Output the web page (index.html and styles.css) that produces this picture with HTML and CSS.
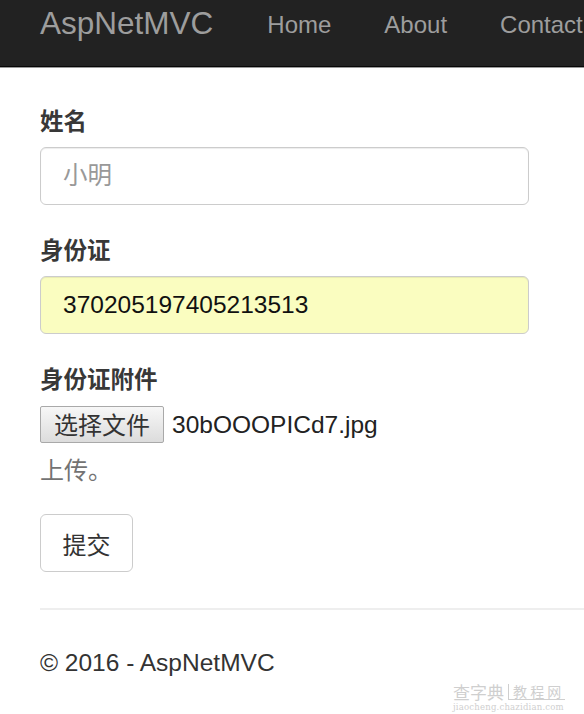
FILE: index.html
```html
<!DOCTYPE html>
<html lang="zh-CN">

<head>
    <meta charset="UTF-8">
    <meta name="viewport" content="width=device-width, initial-scale=1.0">
    <title>身份证上传 - AspNetMVC</title>
    <link rel="stylesheet" href="styles.css">
</head>

<body>
    <div class="navbar">
        <div class="navbar-inner">
            <a class="navbar-brand" href="#">AspNetMVC</a>
            <ul class="nav">
                <li><a href="#">Home</a></li>
                <li><a href="#">About</a></li>
                <li><a href="#">Contact</a></li>
            </ul>
        </div>
    </div>

    <div class="container body-content">
        <form class="upload-form">
            <div class="form-group">
                <label class="control-label">姓名</label>
                <input class="form-control" type="text" placeholder="小明">
            </div>
            <div class="form-group">
                <label class="control-label">身份证</label>
                <input class="form-control autofill" type="text" value="370205197405213513">
            </div>
            <div class="form-group">
                <label class="control-label">身份证附件</label>
                <div class="file-row">
                    <span class="file-btn">选择文件</span>
                    <span class="file-name">30bOOOPICd7.jpg</span>
                </div>
                <p class="help-block">上传。</p>
            </div>
            <button class="btn" type="button">提交</button>
        </form>

        <hr>
        <footer>
            <p>&copy; 2016 - AspNetMVC</p>
        </footer>
    </div>

    <div class="watermark">
        <div class="wm-top"><span class="wm-site">查字典</span><span class="wm-box">教 程 网</span></div>
        <div class="wm-url">jiaocheng.chazidian.com</div>
    </div>
</body>

</html>
```

FILE: styles.css
```css
* {
    box-sizing: border-box;
}

body {
    margin: 0;
    overflow: hidden;
    background: #fff;
    color: #333;
    font-family: "Liberation Sans", Arial, "Noto Sans CJK SC", sans-serif;
    font-size: 24.5px;
    line-height: 34px;
}

/* top bar */
.navbar {
    height: 67px;
    background-color: #222;
    border-bottom: 1px solid #080808;
    box-shadow: 0 1px 0 #9a9a9a;
    white-space: nowrap;
    overflow: hidden;
}

.navbar-inner {
    display: flex;
    align-items: flex-start;
    padding-left: 40px;
}

.navbar-brand {
    color: #9d9d9d;
    text-decoration: none;
    font-size: 31.5px;
    line-height: 33px;
    padding-top: 7px;
}

.nav {
    display: flex;
    gap: 53px;
    list-style: none;
    margin: 0 0 0 54px;
    padding: 0;
}

.nav a {
    color: #9d9d9d;
    text-decoration: none;
    font-size: 24px;
    line-height: 25px;
    display: block;
    padding-top: 12px;
}

/* form */
.body-content {
    padding: 36px 0 0 40px;
}

.form-group {
    margin-bottom: 27px;
}

.control-label {
    display: block;
    margin-bottom: 10px;
    font-family: "Noto Sans CJK SC", sans-serif;
    font-weight: bold;
    font-size: 23.5px;
    color: #383838;
}

.form-control {
    display: block;
    width: 489px;
    height: 58px;
    padding: 0 22px;
    border: 1px solid #ccc;
    border-radius: 6px;
    box-shadow: inset 0 1px 1px rgba(0, 0, 0, 0.075);
    background-color: #fff;
    color: #111;
    font-family: "Liberation Sans", "Noto Sans CJK SC", sans-serif;
    font-size: 24.5px;
}

.form-control::placeholder {
    color: #999;
}

.autofill {
    background-color: #fafdc0;
}

.file-row {
    display: flex;
    align-items: center;
    gap: 8px;
    margin-top: 11px;
}

.file-btn {
    display: inline-block;
    height: 37px;
    padding: 0 13px;
    border: 1px solid #a9a9a9;
    border-radius: 2px;
    background: linear-gradient(#f7f7f7, #dcdcdc);
    font-family: "Noto Sans CJK SC", sans-serif;
    font-size: 24px;
    line-height: 34px;
    color: #333;
}

.file-name {
    color: #222;
}

.help-block {
    margin: 9px 0 0;
    color: #737373;
    font-family: "Noto Sans CJK SC", sans-serif;
    font-size: 24px;
}

.btn {
    width: 93px;
    height: 58px;
    margin-top: 1px;
    padding: 0;
    border: 1px solid #ccc;
    border-radius: 6px;
    background: #fff;
    color: #333;
    font-family: "Noto Sans CJK SC", sans-serif;
    font-size: 24px;
}

hr {
    margin: 36px 0 0;
    border: 0;
    border-top: 2px solid #eee;
}

footer p {
    margin: 36px 0 0;
}

/* site stamp in the corner */
.watermark {
    position: absolute;
    left: 453px;
    top: 683px;
    color: #cfcfcf;
    line-height: 1;
}

.wm-top {
    display: flex;
    align-items: flex-end;
    font-family: "Noto Sans CJK SC", sans-serif;
}

.wm-site {
    font-size: 17px;
}

.wm-box {
    margin-left: 4px;
    padding: 0 4px 1px;
    border-left: 1px solid #cfcfcf;
    border-bottom: 1px solid #cfcfcf;
    font-size: 14px;
}

.wm-url {
    margin-top: 3px;
    font-family: "DejaVu Serif", serif;
    font-size: 8.5px;
    letter-spacing: 0.2px;
}
```
